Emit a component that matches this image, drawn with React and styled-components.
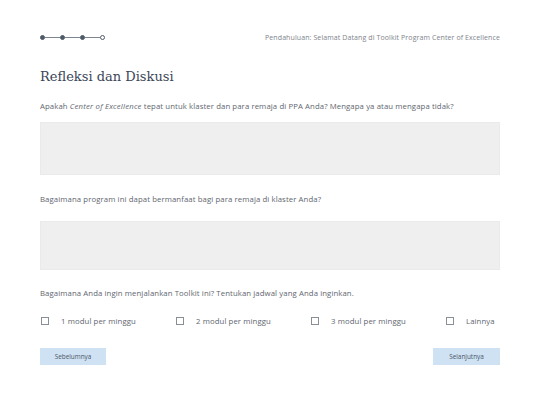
import React from 'react';
import styled, { createGlobalStyle } from 'styled-components';

const GlobalStyle = createGlobalStyle`
  * {
    margin: 0;
    padding: 0;
    box-sizing: border-box;
  }
  body {
    background: #fff;
    font-family: 'Open Sans', 'Liberation Sans', sans-serif;
  }
`;

const Page = styled.div`
  width: 540px;
  height: 405px;
  padding: 33px 40px 0 40px;
  display: flex;
  flex-direction: column;
`;

const TopBar = styled.div`
  display: flex;
  justify-content: space-between;
  align-items: center;
  height: 9px;
`;

const Stepper = styled.div`
  display: flex;
  align-items: center;
`;

const Dot = styled.span`
  width: 5px;
  height: 5px;
  border-radius: 50%;
  background: ${(p) => (p.$done ? '#4f5a68' : '#fff')};
  border: 1px solid #4f5a68;
`;

const Line = styled.span`
  width: 15px;
  height: 1px;
  background: #7d8590;
`;

const Crumb = styled.div`
  font-size: 7px;
  color: #7e848c;
  letter-spacing: 0.1px;
`;

const Title = styled.h1`
  font-family: 'DejaVu Serif', 'Liberation Serif', serif;
  font-weight: normal;
  font-size: 13px;
  color: #3b4658;
  margin-top: 27px;
`;

const Question = styled.p`
  font-size: 7.75px;
  color: #62676f;
  letter-spacing: 0.1px;
  margin-top: ${(p) => p.$top}px;
  em {
    font-style: italic;
    letter-spacing: 0.2px;
  }
`;

const Answer = styled.textarea`
  display: block;
  width: 100%;
  height: ${(p) => p.$h}px;
  margin-top: ${(p) => p.$top}px;
  background: #efefef;
  border: 1px solid #eaeaea;
  resize: none;
  outline: none;
`;

const Options = styled.div`
  display: grid;
  grid-template-columns: 135px 135px 135px auto;
  margin-top: 18px;
`;

const Option = styled.label`
  display: flex;
  align-items: center;
  font-size: 7.75px;
  color: #62676f;
  letter-spacing: 0.1px;
`;

const Box = styled.span`
  width: 8px;
  height: 8px;
  border: 1px solid #8a8f96;
  margin: 0 12px 0 1px;
`;

const Footer = styled.div`
  display: flex;
  justify-content: space-between;
  margin-top: 22px;
`;

const NavButton = styled.button`
  width: ${(p) => p.$w}px;
  height: 17px;
  background: #cfe2f3;
  border: none;
  font-family: 'Open Sans', 'Liberation Sans', sans-serif;
  font-size: 6.4px;
  color: #4a5666;
`;

const App = () => {
  return (
    <>
      <GlobalStyle />
      <Page>
        <TopBar>
          <Stepper>
            <Dot $done />
            <Line />
            <Dot $done />
            <Line />
            <Dot $done />
            <Line />
            <Dot />
          </Stepper>
          <Crumb>Pendahuluan: Selamat Datang di Toolkit Program Center of Excellence</Crumb>
        </TopBar>
        <Title>Refleksi dan Diskusi</Title>
        <Question $top={17}>
          Apakah <em>Center of Excellence</em> tepat untuk klaster dan para remaja di PPA Anda? Mengapa ya atau mengapa tidak?
        </Question>
        <Answer $top={11} $h={53} />
        <Question $top={19}>Bagaimana program ini dapat bermanfaat bagi para remaja di klaster Anda?</Question>
        <Answer $top={17} $h={49} />
        <Question $top={18}>Bagaimana Anda ingin menjalankan Toolkit ini? Tentukan jadwal yang Anda inginkan.</Question>
        <Options>
          <Option><Box />1 modul per minggu</Option>
          <Option><Box />2 modul per minggu</Option>
          <Option><Box />3 modul per minggu</Option>
          <Option><Box />Lainnya</Option>
        </Options>
        <Footer>
          <NavButton $w={66}>Sebelumnya</NavButton>
          <NavButton $w={67}>Selanjutnya</NavButton>
        </Footer>
      </Page>
    </>
  );
};

export default App;
